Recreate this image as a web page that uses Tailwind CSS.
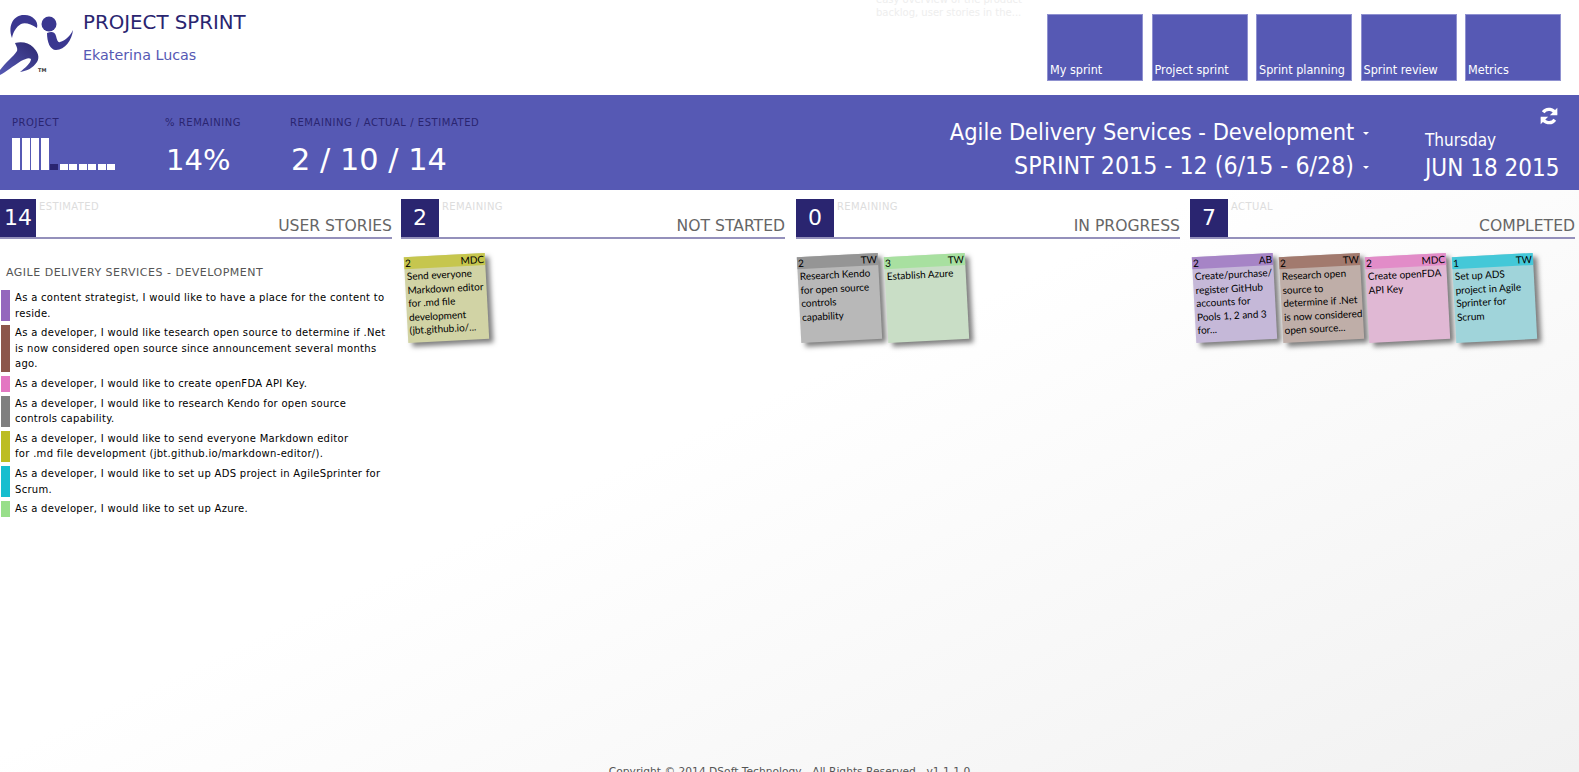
<!DOCTYPE html>
<html lang="en">
<head>
    <meta charset="UTF-8">
    <title>Project Sprint</title>
    <script src="https://cdn.jsdelivr.net/npm/@tailwindcss/browser@4"></script>
</head>
<body class="h-screen overflow-hidden font-['DejaVu_Sans',sans-serif]">
<div class="h-[772px] overflow-hidden flex flex-col bg-[linear-gradient(155deg,#ffffff_50%,#f1f1f1_100%)]">

    <!-- Header -->
    <header class="h-[95px] shrink-0 flex bg-white">
        <svg class="w-[83px] h-[80px] shrink-0" viewBox="0 0 83 80">
            <defs>
                <linearGradient id="runner" x1="1" y1="0" x2="0" y2="1">
                    <stop offset="0" stop-color="#2c2870"/>
                    <stop offset="1" stop-color="#5659b4"/>
                </linearGradient>
            </defs>
            <circle cx="49" cy="24" r="7.5" fill="#3a3790"/>
            <path fill="#3a3790" d="M12 38C7 24 15 14 25 15C32 15 39 21 37 28C31 24 25 22 21 24C16 27 13 32 12 38Z"/>
            <path fill="#3a3790" d="M47 33C52 31 55 32 56 36C57 40 58 43 60 42C66 40 70 36 73 30C72 40 65 50 56 50C50 50 47 42 47 33Z"/>
            <path fill="url(#runner)" d="M15 43C22 41 29 43 33 47C38 52 40 57 37 62C33 68 27 71 20 72C25 68 31 63 31 59C29 57 25 59 21 61C13 66 6 72 0 75L0 70C6 62 13 57 17 51C18 48 16 46 15 43Z"/>
            <text x="38" y="72" font-size="5" font-weight="700" fill="#333">TM</text>
        </svg>
        <div class="pt-[12px]">
            <h1 class="text-[19.8px] leading-[22px] text-[#2a2570]">PROJECT SPRINT</h1>
            <p class="mt-[11px] text-[14.3px] leading-[20px] text-[#5659b4]">Ekaterina Lucas</p>
        </div>
        <p class="ml-auto -mt-[7px] w-[160px] text-[10px] leading-[13px] text-[#eeeeee]">easy overview of the product backlog, user stories in the...</p>
        <nav class="ml-[11px] mr-[18px] mt-[14px] flex gap-[8.5px] text-[12.5px] text-white [font-stretch:condensed]">
            <a class="w-[96px] h-[67px] flex items-end pl-[2px] bg-[#5659b4] border border-[#8f91d0] whitespace-nowrap">My sprint</a>
            <a class="w-[96px] h-[67px] flex items-end pl-[2px] bg-[#5659b4] border border-[#8f91d0] whitespace-nowrap">Project sprint</a>
            <a class="w-[96px] h-[67px] flex items-end pl-[2px] bg-[#5659b4] border border-[#8f91d0] whitespace-nowrap">Sprint planning</a>
            <a class="w-[96px] h-[67px] flex items-end pl-[2px] bg-[#5659b4] border border-[#8f91d0] whitespace-nowrap">Sprint review</a>
            <a class="w-[96px] h-[67px] flex items-end pl-[2px] bg-[#5659b4] border border-[#8f91d0] whitespace-nowrap">Metrics</a>
        </nav>
    </header>

    <!-- Sprint summary -->
    <section class="h-[95px] shrink-0 flex bg-[#5659b4] text-white relative">
        <div class="ml-[12px] w-[153px] pt-[22px]">
            <div class="text-[10px] leading-[12px] tracking-[0.55px] text-[#2a2570]">PROJECT</div>
            <div class="mt-[9px] flex items-end gap-[1.5px] h-[32px]">
                <i class="w-[8px] h-[32px] bg-white"></i>
                <i class="w-[8px] h-[32px] bg-white"></i>
                <i class="w-[8px] h-[32px] bg-white"></i>
                <i class="w-[8px] h-[32px] bg-white"></i>
                <i class="w-[8px] h-[6px] bg-[#2a2570]"></i>
                <i class="w-[8px] h-[6px] bg-white"></i>
                <i class="w-[8px] h-[6px] bg-white"></i>
                <i class="w-[8px] h-[6px] bg-white"></i>
                <i class="w-[8px] h-[6px] bg-white"></i>
                <i class="w-[8px] h-[6px] bg-white"></i>
                <i class="w-[8px] h-[6px] bg-white"></i>
            </div>
        </div>
        <div class="w-[125px] pt-[22px]">
            <div class="text-[10px] leading-[12px] tracking-[0.55px] text-[#2a2570]">% REMAINING</div>
            <div class="mt-[13px] ml-[1px] text-[29px] leading-[36px]">14%</div>
        </div>
        <div class="pt-[22px]">
            <div class="text-[10px] leading-[12px] tracking-[0.55px] text-[#2a2570]">REMAINING / ACTUAL / ESTIMATED</div>
            <div class="mt-[13px] ml-[1px] text-[30.4px] leading-[36px]">2 / 10 / 14</div>
        </div>
        <div class="ml-auto pt-[22px] text-right [font-stretch:condensed]">
            <div class="text-[23.4px] leading-[30px]">Agile Delivery Services - Development <span class="inline-block align-middle ml-[2px] border-x-[3px] border-t-[3px] border-x-transparent border-t-white"></span></div>
            <div class="mt-[4px] text-[24.7px] leading-[30px]">SPRINT 2015 - 12 (6/15 - 6/28) <span class="inline-block align-middle ml-[2px] border-x-[3px] border-t-[3px] border-x-transparent border-t-white"></span></div>
        </div>
        <div class="ml-[56px] mr-[19px] w-[135px] pt-[34px] [font-stretch:condensed]">
            <div class="text-[17px] leading-[22px]">Thursday</div>
            <div class="mt-[2px] text-[24px] leading-[30px] whitespace-nowrap">JUN 18 2015</div>
        </div>
        <svg class="absolute right-[20px] top-[11px] w-[20px] h-[20px]" viewBox="0 0 24 24" fill="none" stroke="#fff" stroke-width="4">
            <path d="M20 10A8.5 8.5 0 0 0 5 7.5"/>
            <path d="M4 14a8.5 8.5 0 0 0 15 2.5"/>
            <path fill="#fff" stroke="none" d="M22 2v9h-9zM2 22v-9h9z"/>
        </svg>
    </section>

    <!-- Board -->
    <main class="flex-1 flex pt-[9px] pr-[4px]">

        <!-- User stories -->
        <section class="w-[392px] shrink-0">
            <div class="h-[40px] flex border-b-2 border-[#9490bb]">
                <div class="w-[36px] bg-[#2a2570] text-white text-[22px] leading-[37px] text-center">14</div>
                <div class="flex-1 relative">
                    <span class="absolute left-[3px] top-[2px] text-[10px] leading-[12px] tracking-[0.4px] text-[#dddddd]">ESTIMATED</span>
                    <span class="absolute right-0 bottom-[1px] text-[15.6px] leading-[20px] text-[#666666]">USER STORIES</span>
                </div>
            </div>
            <h2 class="mt-[27px] ml-[6px] text-[11px] leading-[14px] tracking-[0.5px] text-[#555555]">AGILE DELIVERY SERVICES - DEVELOPMENT</h2>
            <ul class="mt-[10px] ml-[1px] pr-[3px] flex flex-col gap-[4px] text-[10px] leading-[15.6px] tracking-[0.3px] text-black">
                <li class="flex gap-[5px]"><i class="w-[9px] shrink-0 bg-[#9467bd]"></i><span>As a content strategist, I would like to have a place for the content to reside.</span></li>
                <li class="flex gap-[5px]"><i class="w-[9px] shrink-0 bg-[#8c564b]"></i><span>As a developer, I would like tesearch open source to determine if .Net is now considered open source since announcement several months ago.</span></li>
                <li class="flex gap-[5px]"><i class="w-[9px] shrink-0 bg-[#e377c2]"></i><span>As a developer, I would like to create openFDA API Key.</span></li>
                <li class="flex gap-[5px]"><i class="w-[9px] shrink-0 bg-[#7f7f7f]"></i><span>As a developer, I would like to research Kendo for open source controls capability.</span></li>
                <li class="flex gap-[5px]"><i class="w-[9px] shrink-0 bg-[#bcbd22]"></i><span>As a developer, I would like to send everyone Markdown editor<br>for .md file development (jbt.github.io/markdown-editor/).</span></li>
                <li class="flex gap-[5px]"><i class="w-[9px] shrink-0 bg-[#17becf]"></i><span>As a developer, I would like to set up ADS project in AgileSprinter for Scrum.</span></li>
                <li class="flex gap-[5px]"><i class="w-[9px] shrink-0 bg-[#98df8a]"></i><span>As a developer, I would like to set up Azure.</span></li>
            </ul>
        </section>

        <!-- Not started -->
        <section class="ml-[9px] w-[384px] shrink-0">
            <div class="h-[40px] flex border-b-2 border-[#9490bb]">
                <div class="w-[38px] bg-[#2a2570] text-white text-[22px] leading-[37px] text-center">2</div>
                <div class="flex-1 relative">
                    <span class="absolute left-[3px] top-[2px] text-[10px] leading-[12px] tracking-[0.4px] text-[#dddddd]">REMAINING</span>
                    <span class="absolute right-0 bottom-[1px] text-[15.6px] leading-[20px] text-[#666666]">NOT STARTED</span>
                </div>
            </div>
            <div class="mt-[16px] ml-[5px] flex gap-[5px] text-[10px] leading-[13.5px] font-['Lato',sans-serif] text-black">
                <article class="w-[81px] h-[86px] -rotate-3 bg-[#d1d3a5] shadow-[4px_4px_5px_rgba(0,0,0,0.5)]">
                    <div class="h-[12px] px-[1px] flex justify-between leading-[12px] bg-[#c6c64e]"><span>2</span><span>MDC</span></div>
                    <p class="pt-[1px] px-[2px] whitespace-nowrap">Send everyone<br>Markdown editor<br>for .md file<br>development<br>(jbt.github.io/...</p>
                </article>
            </div>
        </section>

        <!-- In progress -->
        <section class="ml-[11px] w-[384px] shrink-0">
            <div class="h-[40px] flex border-b-2 border-[#9490bb]">
                <div class="w-[38px] bg-[#2a2570] text-white text-[22px] leading-[37px] text-center">0</div>
                <div class="flex-1 relative">
                    <span class="absolute left-[3px] top-[2px] text-[10px] leading-[12px] tracking-[0.4px] text-[#dddddd]">REMAINING</span>
                    <span class="absolute right-0 bottom-[1px] text-[15.6px] leading-[20px] text-[#666666]">IN PROGRESS</span>
                </div>
            </div>
            <div class="mt-[16px] ml-[3px] flex gap-[6px] text-[10px] leading-[13.5px] font-['Lato',sans-serif] text-black">
                <article class="w-[81px] h-[86px] -rotate-3 bg-[#b8b8b8] shadow-[4px_4px_5px_rgba(0,0,0,0.5)]">
                    <div class="h-[12px] px-[1px] flex justify-between leading-[12px] bg-[#959595]"><span>2</span><span>TW</span></div>
                    <p class="pt-[1px] px-[2px] whitespace-nowrap">Research Kendo<br>for open source<br>controls<br>capability</p>
                </article>
                <article class="w-[81px] h-[86px] -rotate-3 bg-[#c9dec6] shadow-[4px_4px_5px_rgba(0,0,0,0.5)]">
                    <div class="h-[12px] px-[1px] flex justify-between leading-[12px] bg-[#a8e0a0]"><span>3</span><span>TW</span></div>
                    <p class="pt-[1px] px-[2px] whitespace-nowrap">Establish Azure</p>
                </article>
            </div>
        </section>

        <!-- Completed -->
        <section class="ml-[10px] w-[385px] shrink-0">
            <div class="h-[40px] flex border-b-2 border-[#9490bb]">
                <div class="w-[38px] bg-[#2a2570] text-white text-[22px] leading-[37px] text-center">7</div>
                <div class="flex-1 relative">
                    <span class="absolute left-[3px] top-[2px] text-[10px] leading-[12px] tracking-[0.4px] text-[#dddddd]">ACTUAL</span>
                    <span class="absolute right-0 bottom-[1px] text-[15.6px] leading-[20px] text-[#666666]">COMPLETED</span>
                </div>
            </div>
            <div class="mt-[16px] ml-[4px] flex gap-[5.5px] text-[10px] leading-[13.5px] font-['Lato',sans-serif] text-black">
                <article class="w-[81px] h-[86px] -rotate-3 bg-[#c5b8d8] shadow-[4px_4px_5px_rgba(0,0,0,0.5)]">
                    <div class="h-[12px] px-[1px] flex justify-between leading-[12px] bg-[#a684c6]"><span>2</span><span>AB</span></div>
                    <p class="pt-[1px] px-[2px] whitespace-nowrap">Create/purchase/<br>register GitHub<br>accounts for<br>Pools 1, 2 and 3<br>for...</p>
                </article>
                <article class="w-[81px] h-[86px] -rotate-3 bg-[#bfaea8] shadow-[4px_4px_5px_rgba(0,0,0,0.5)]">
                    <div class="h-[12px] px-[1px] flex justify-between leading-[12px] bg-[#a27a6e]"><span>2</span><span>TW</span></div>
                    <p class="pt-[1px] px-[2px] whitespace-nowrap">Research open<br>source to<br>determine if .Net<br>is now considered<br>open source...</p>
                </article>
                <article class="w-[81px] h-[86px] -rotate-3 bg-[#e0b8d4] shadow-[4px_4px_5px_rgba(0,0,0,0.5)]">
                    <div class="h-[12px] px-[1px] flex justify-between leading-[12px] bg-[#e28cc8]"><span>2</span><span>MDC</span></div>
                    <p class="pt-[1px] px-[2px] whitespace-nowrap">Create openFDA<br>API Key</p>
                </article>
                <article class="w-[81px] h-[86px] -rotate-3 bg-[#a0d4da] shadow-[4px_4px_5px_rgba(0,0,0,0.5)]">
                    <div class="h-[12px] px-[1px] flex justify-between leading-[12px] bg-[#44c8d8]"><span>1</span><span>TW</span></div>
                    <p class="pt-[1px] px-[2px] whitespace-nowrap">Set up ADS<br>project in Agile<br>Sprinter for<br>Scrum</p>
                </article>
            </div>
        </section>
    </main>

    <footer class="shrink-0 h-[7px] text-center text-[10.7px] leading-[14px] text-[#555555]">Copyright © 2014 DSoft Technology - All Rights Reserved - v1.1.1.0</footer>
</div>
</body>
</html>
